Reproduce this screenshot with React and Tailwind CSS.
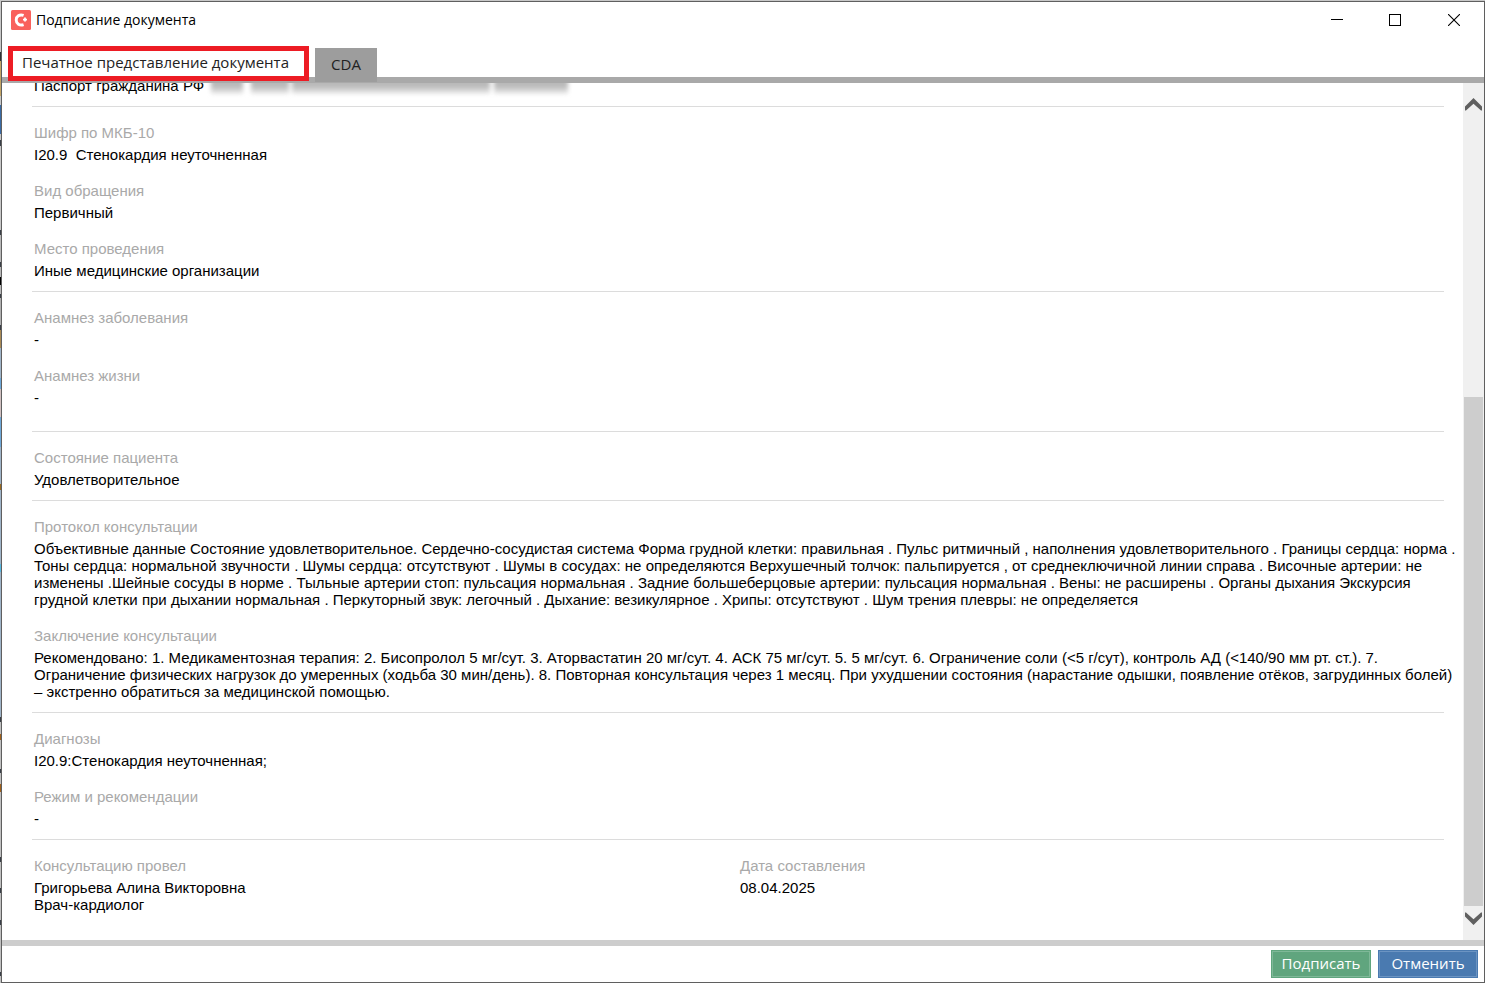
function Field({ label, children, className = '' }) {
  return (
    <div className={`pl-[2px] ${className}`}>
      <dt className="mb-[5px] text-[#a9a9a9]">{label}</dt>
      <dd className="whitespace-pre-wrap text-black">{children}</dd>
    </div>
  )
}

function Section({ children, className = 'pb-[12px]' }) {
  return (
    <dl className={`flex flex-col gap-[19px] border-b border-[#dcdcdc] pt-[17px] ${className}`}>
      {children}
    </dl>
  )
}

function TitleBar() {
  return (
    <header className="flex h-[44px] shrink-0 items-start justify-between">
      <div className="flex items-center gap-[5px] pt-[8px] pl-[9px]">
        <svg className="size-[20px]" viewBox="0 0 20 20" aria-hidden="true">
          <rect width="20" height="20" rx="1.5" fill="#f9615c" />
          <path d="M12.600 5.400C8.400 4 5.200 6.400 5.200 10s3.400 6 7.400 4.600" fill="none" stroke="#fff" strokeWidth="2.900" />
          <path d="M14 7.600v4M12 9.600h4" stroke="#fff" strokeWidth="1.800" />
        </svg>
        <h1 className="font-['Open_Sans',sans-serif] text-[14px] leading-[20px] text-black">Подписание документа</h1>
      </div>
      <div className="flex">
        <button type="button" aria-label="Свернуть" className="flex h-[36px] w-[58px] items-center justify-center">
          <svg className="size-[12px]" viewBox="0 0 12 12"><path d="M0 5.5h12" stroke="#000" /></svg>
        </button>
        <button type="button" aria-label="Развернуть" className="flex h-[36px] w-[58px] items-center justify-center">
          <svg className="size-[12px]" viewBox="0 0 12 12"><rect x=".5" y=".5" width="11" height="11" fill="none" stroke="#000" /></svg>
        </button>
        <button type="button" aria-label="Закрыть" className="flex h-[36px] w-[60px] items-center justify-center">
          <svg className="size-[12px]" viewBox="0 0 12 12"><path d="M0 0 12 12M12 0 0 12" stroke="#000" strokeWidth="1.1" /></svg>
        </button>
      </div>
    </header>
  )
}

// Slice of the desktop visible beside the window: [colour, share of the height]
const desktop = [
  ['#c8c8c8', 52], ['#2f3136', 9], ['#c4a565', 35], ['#c8c8c8', 10], ['#3a6ba5', 29], ['#c8c8c8', 6],
  ['#3a3f47', 6], ['#c8c8c8', 84], ['#3a3f47', 5], ['#b8b8b8', 27], ['#3a3f47', 5], ['#b8b8b8', 10],
  ['#000000', 8], ['#b8b8b8', 9], ['#3a3f47', 5], ['#b0b0b0', 27], ['#3a3f47', 5], ['#a98a55', 18],
  ['#9fb4c8', 30], ['#6ea8d8', 11], ['#d0c0c0', 28], ['#6ea8d8', 30], ['#9fb4c8', 37], ['#9a6a20', 7],
  ['#9fb4c8', 74], ['#58b8e0', 8], ['#9fb4c8', 146], ['#3a3f47', 5], ['#c0c0c0', 12], ['#a0601a', 6],
  ['#c0c0c0', 29], ['#3a3f47', 4], ['#c0c0c0', 11], ['#a0601a', 8], ['#c0c0c0', 65], ['#3a3f47', 5],
  ['#c0c0c0', 27], ['#3a3f47', 5], ['#c0c0c0', 27], ['#3a3f47', 5], ['#c0c0c0', 47], ['#3a3f47', 4], ['#c0c0c0', 7],
]

const redacted = ['w-[32px]', 'ml-[8px] w-[38px]', 'ml-[3px] w-[198px]', 'ml-[4px] w-[74px]']

export default function App() {
  return (
    <div className="flex h-screen bg-[#c8c8c8]">
      <div className="flex w-px shrink-0 flex-col" aria-hidden="true">
        {desktop.map(([color, share], i) => (
          <div key={i} style={{ flex: share, backgroundColor: color }} />
        ))}
      </div>
      <div className="mt-px flex min-w-0 flex-1 flex-col border border-[#5f5f5f] bg-white">
        <TitleBar />
        <div role="tablist" className="flex h-[31px] shrink-0 items-start gap-[6px] pl-[6px] font-['Open_Sans',sans-serif] text-[15px] text-[#222]">
          <button type="button" role="tab" aria-selected="true" className="z-10 h-[35px] w-[301px] border-[5px] border-[#ed1c24] bg-white pb-[2px] pl-[9px] text-left leading-[21px] whitespace-nowrap">
            Печатное представление документа
          </button>
          <button type="button" role="tab" aria-selected="false" className="z-10 mt-[2px] h-[34px] w-[62px] bg-[#9d9d9d] pb-[2px] leading-[32px]">
            CDA
          </button>
        </div>
        <div className="h-[6px] shrink-0 bg-[#a9a9a9]" />

        <div className="flex min-h-0 flex-1">
          <main className="min-w-0 flex-1 overflow-hidden pr-[19px] pl-[30px] font-['Liberation_Sans',Arial,sans-serif] text-[15px] leading-[17px]">
            <div className="-mt-[6px] flex border-b border-[#dcdcdc] px-[2px] pb-[12px]">
              <span>Паспорт гражданина РФ</span>
              <span className="ml-[7px] flex h-[17px] blur-[2px]" aria-hidden="true">
                {redacted.map((c) => (
                  <span key={c} className={`h-[17px] bg-linear-to-b from-[#b8b8b8] from-50% to-[#eeeeee] ${c}`} />
                ))}
              </span>
            </div>
            <Section>
              <Field label="Шифр по МКБ-10">{'I20.9  Стенокардия неуточненная'}</Field>
              <Field label="Вид обращения">Первичный</Field>
              <Field label="Место проведения">Иные медицинские организации</Field>
            </Section>
            <Section className="pb-[25px]">
              <Field label="Анамнез заболевания">-</Field>
              <Field label="Анамнез жизни">-</Field>
            </Section>
            <Section>
              <Field label="Состояние пациента">Удовлетворительное</Field>
            </Section>
            <Section>
              <Field label="Протокол консультации" className="-mr-[16px]">
                Объективные данные Состояние удовлетворительное. Сердечно-сосудистая система Форма грудной клетки: правильная . Пульс ритмичный , наполнения удовлетворительного . Границы сердца: норма . Тоны сердца: нормальной звучности . Шумы сердца: отсутствуют . Шумы в сосудах: не определяются Верхушечный толчок: пальпируется , от среднеключичной линии справа . Височные артерии: не изменены .Шейные сосуды в норме . Тыльные артерии стоп: пульсация нормальная . Задние большеберцовые артерии: пульсация нормальная . Вены: не расширены . Органы дыхания Экскурсия грудной клетки при дыхании нормальная . Перкуторный звук: легочный . Дыхание: везикулярное . Хрипы: отсутствуют . Шум трения плевры: не определяется
              </Field>
              <Field label="Заключение консультации" className="-mr-[16px]">
                {'Рекомендовано: 1. Медикаментозная терапия: 2. Бисопролол 5 мг/сут. 3. Аторвастатин 20 мг/сут. 4. АСК 75 мг/сут. 5. 5 мг/сут. 6. Ограничение соли (<5 г/сут), контроль АД (<140/90 мм рт. ст.). 7. Ограничение физических нагрузок до умеренных (ходьба 30 мин/день). 8. Повторная консультация через 1 месяц. При ухудшении состояния (нарастание одышки, появление отёков, загрудинных болей) – экстренно обратиться за медицинской помощью.'}
              </Field>
            </Section>
            <Section>
              <Field label="Диагнозы">I20.9:Стенокардия неуточненная;</Field>
              <Field label="Режим и рекомендации">-</Field>
            </Section>
            <dl className="grid grid-cols-2 pt-[17px]">
              <Field label="Консультацию провел">{'Григорьева Алина Викторовна\nВрач-кардиолог'}</Field>
              <Field label="Дата составления">08.04.2025</Field>
            </dl>
          </main>
          <div className="flex w-[21px] shrink-0 flex-col bg-[#f0f0f0] px-px">
            <button type="button" aria-label="Прокрутить вверх" className="flex h-[34px] shrink-0 items-center justify-center pt-[8px]">
              <svg className="h-[13px] w-[17px]" viewBox="0 0 17 13"><path d="M0 8.500 8.500 0 17 8.500V12.500H16L8.500 5.800 1 12.500H0Z" fill="#606060" /></svg>
            </button>
            <div className="flex min-h-0 flex-1 flex-col">
              <div className="flex-[280]" />
              <div className="flex-[509] bg-[#cdcdcd]" />
            </div>
            <button type="button" aria-label="Прокрутить вниз" className="flex h-[34px] shrink-0 items-start justify-center pt-[6px]">
              <svg className="h-[13px] w-[17px]" viewBox="0 0 17 13"><path d="M0 4.500 8.500 13 17 4.500V.5H16L8.500 7.200 1 .5H0Z" fill="#606060" /></svg>
            </button>
          </div>
        </div>

        <footer className="flex shrink-0 justify-end gap-[7px] border-t-[6px] border-[#cdcdcd] px-[6px] py-[4px] font-['Open_Sans',sans-serif] text-[15px] leading-[24px] text-white">
          <button type="button" className="h-[28px] w-[100px] border border-[#60a57e] bg-[#60a57e] pb-[2px] inset-ring inset-ring-[#7fb898]">Подписать</button>
          <button type="button" className="h-[28px] w-[100px] border border-[#4a7ab0] bg-[#4a7ab0] pb-[2px] inset-ring inset-ring-[#6c94c2]">Отменить</button>
        </footer>
      </div>
    </div>
  )
}
